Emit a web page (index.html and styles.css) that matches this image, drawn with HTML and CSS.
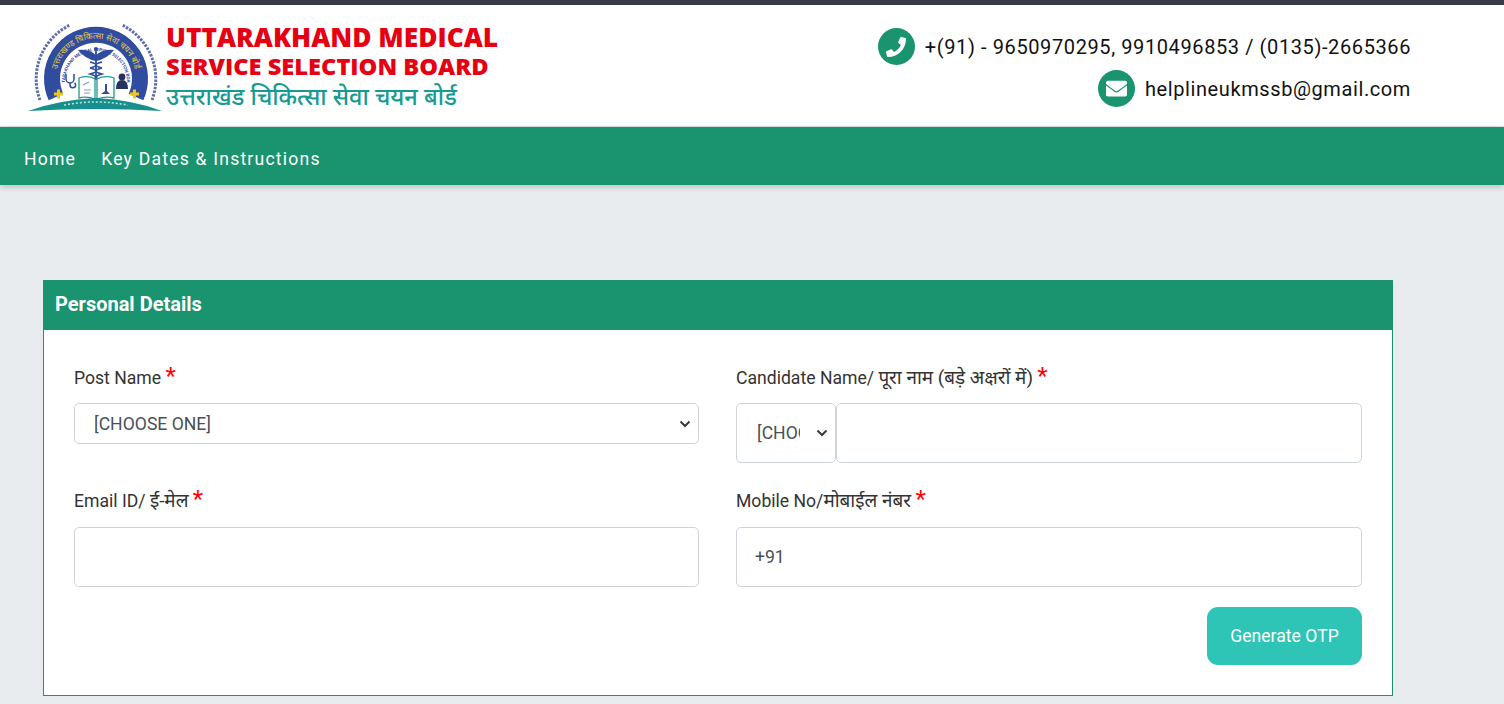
FILE: index.html
```html
<!DOCTYPE html>
<html lang="en">
<head>
<meta charset="utf-8">
<title>Uttarakhand Medical Service Selection Board</title>
<link rel="stylesheet" href="styles.css">
</head>
<body>
<header class="site-header">
  <div class="brand">
    <svg class="logo" viewBox="0 0 136 92" width="136" height="92" aria-hidden="true">
      <defs>
        <path id="ring-yellow" d="M28.500 63 A40 40 0 1 1 107.500 63"/>
        <path id="ring-inner" d="M37 60 A31 31 0 1 1 99 60"/>
      </defs>
      <path d="M28 75 A44 44 0 1 1 108 75" fill="none" stroke="#2f4c9f" stroke-width="16"/>
      <text class="logo-ring-hi"><textPath href="#ring-yellow" startOffset="50%" text-anchor="middle">उत्तराखण्ड चिकित्सा सेवा चयन बोर्ड</textPath></text>
      <text class="logo-ring-en"><textPath href="#ring-inner" startOffset="50%" text-anchor="middle">UTTARAKHAND MEDICAL SERVICE SELECTION BOARD</textPath></text>
      <path d="M12 78 A60 60 0 0 1 42 3" fill="none" stroke="#5f6fa8" stroke-width="3" stroke-dasharray="2.500 1.200"/>
      <path d="M124 78 A60 60 0 0 0 94 3" fill="none" stroke="#5f6fa8" stroke-width="3" stroke-dasharray="2.500 1.200"/>
      <path d="M68 26 v32" stroke="#2f4c9f" stroke-width="1.800"/>
      <circle cx="68" cy="27" r="2" fill="#2f4c9f"/>
      <path d="M50 28 q11 -1 18 5 q7 -6 18 -5 q-7 9 -18 11 q-11 -2 -18 -11z" fill="#2f4c9f"/>
      <path d="M62 40 q12 3 0 6 q12 3 0 6 q10 3 3 5 M74 40 q-12 3 0 6 q-12 3 0 6 q-10 3 -3 5" fill="none" stroke="#2f4c9f" stroke-width="1.500"/>
      <path d="M38 52 v5 a4 4 0 0 0 8 0 v-5" fill="none" stroke="#2f4c9f" stroke-width="1.500"/>
      <path d="M42 61 v2 a2.800 2.800 0 0 0 5.600 0 a2.800 2.800 0 0 0 -1 -2.200" fill="none" stroke="#2f4c9f" stroke-width="1.500"/>
      <path d="M51 56 q9 -3 16 1 v20 q-8 -3 -16 -1z M86 56 q-9 -3 -17 1 v20 q9 -3 17 -1z" fill="#fff" stroke="#1f9c8e" stroke-width="1.300"/>
      <path d="M73 72 h9 l-3 -3 v-7 h-2 v7z" fill="#2f4c9f"/>
      <path d="M55 63 l6 -3 M56 68 h7 M56 71 h6" stroke="#8e9ab0" stroke-width="1.200"/>
      <circle cx="94" cy="55" r="3.400" fill="#24345f"/>
      <path d="M88 67 q0 -9 6 -9 q6 0 6 9z" fill="#24345f"/>
      <path d="M26 72 h9 M30.500 67.500 v9 M102 72 h9 M106.500 67.500 v9" stroke="#f0c419" stroke-width="3"/>
      <path d="M0 89 Q30 78 68 76 Q106 78 134 89 Q68 85 0 89Z" fill="#178f8d"/>
      <path d="M36 83 Q68 77 100 83" fill="none" stroke="#bfe6df" stroke-width="1.500" stroke-dasharray="2 2"/>
    </svg>
    <div class="brand-text">
      <div class="brand-line-one">UTTARAKHAND MEDICAL</div>
      <div class="brand-line-two">SERVICE SELECTION BOARD</div>
      <div class="brand-line-three">उत्तराखंड चिकित्सा सेवा चयन बोर्ड</div>
    </div>
  </div>
  <div class="contacts">
    <div class="contact">
      <span class="contact-icon">
        <svg viewBox="0 0 512 512" width="20" height="20"><path d="M493.400 24.600l-104-24c-11.300-2.600-22.900 3.300-27.500 13.900l-48 112c-4.200 9.800-1.400 21.300 6.900 28l60.600 49.600c-36 76.700-98.900 140.500-177.200 177.200l-49.600-60.600c-6.800-8.300-18.200-11.100-28-6.900l-112 48C3.900 366.500-2 378.100.6 389.400l24 104C27.100 504.200 36.700 512 48 512c256.100 0 464-207.500 464-464 0-11.200-7.700-20.900-18.600-23.400z" fill="#fff"/></svg>
      </span>
      <span>+(91) - 9650970295, 9910496853 / (0135)-2665366</span>
    </div>
    <div class="contact">
      <span class="contact-icon">
        <svg viewBox="0 0 512 512" width="21" height="21"><path d="M502.300 190.800c3.900-3.100 9.700-.2 9.700 4.700V400c0 26.500-21.500 48-48 48H48c-26.500 0-48-21.500-48-48V195.600c0-5 5.700-7.800 9.700-4.700 22.400 17.400 52.100 39.500 154.100 113.600 21.100 15.400 56.700 47.800 92.200 47.600 35.700.3 72-32.800 92.300-47.600 102-74.100 131.600-96.300 154-113.700zM256 320c23.200.4 56.600-29.200 73.400-41.400 132.700-96.300 142.800-104.700 173.400-128.700 5.800-4.500 9.200-11.500 9.200-18.900v-19c0-26.500-21.500-48-48-48H48C21.500 64 0 85.500 0 112v19c0 7.400 3.400 14.300 9.200 18.900 30.600 23.900 40.700 32.400 173.400 128.700 16.800 12.200 50.200 41.800 73.400 41.400z" fill="#fff"/></svg>
      </span>
      <span>helplineukmssb@gmail.com</span>
    </div>
  </div>
</header>
<nav class="main-nav">
  <a href="#">Home</a>
  <a href="#">Key Dates &amp; Instructions</a>
</nav>
<main class="content">
  <section class="card">
    <h2 class="card-title">Personal Details</h2>
    <form class="form-grid">
      <div class="field">
        <label>Post Name <span class="req">*</span></label>
        <select class="control short"><option>[CHOOSE ONE]</option></select>
      </div>
      <div class="field">
        <label>Candidate Name/ <span class="hi">पूरा नाम (बड़े अक्षरों में)</span> <span class="req">*</span></label>
        <div class="name-group">
          <select class="control tall title-select"><option>[CHOOSE ONE]</option></select>
          <input class="control tall" type="text">
        </div>
      </div>
      <div class="field field-lower">
        <label>Email ID/ <span class="hi">ई-मेल</span> <span class="req">*</span></label>
        <input class="control tall" type="text">
      </div>
      <div class="field field-lower">
        <label>Mobile No/<span class="hi">मोबाईल नंबर</span> <span class="req">*</span></label>
        <input class="control tall" type="text" value="+91">
      </div>
      <div class="actions">
        <button class="otp" type="button">Generate OTP</button>
      </div>
    </form>
  </section>
</main>
</body>
</html>
```
FILE: styles.css
```css
* { box-sizing: border-box; }
html, body { margin: 0; height: 704px; overflow: hidden; }
body { background: #e9ecef; color: #212529; font-family: Roboto, "Noto Sans", "Noto Sans Devanagari", sans-serif; font-size: 16px; }

.site-header { height: 127px; background: #fff; border-top: 5px solid #373a47; border-bottom: 1px solid #dee2e6; display: flex; justify-content: space-between; padding: 17px 93px 0 28px; }
.brand { display: flex; gap: 2px; align-items: flex-start; }
.logo { flex: none; display: block; }
.logo-ring-hi { font-family: "Noto Sans", sans-serif; font-size: 8.500px; fill: #e8c84a; }
.logo-ring-en { font-family: Roboto, sans-serif; font-size: 4.400px; font-weight: 700; fill: #2f4c9f; }
.brand-text { font-family: "Open Sans", sans-serif; font-weight: 800; color: #e60012; }
.brand-line-one { font-size: 26.300px; line-height: 30px; white-space: nowrap; }
.brand-line-two { font-size: 23.650px; line-height: 28px; white-space: nowrap; }
.brand-line-three { font-family: "Noto Sans", sans-serif; font-weight: 500; font-size: 23.550px; line-height: 32px; color: #179a92; white-space: nowrap; }

.contacts { display: flex; flex-direction: column; align-items: flex-end; gap: 5px; padding-top: 6px; }
.contact { display: flex; align-items: center; gap: 10px; font-size: 20px; letter-spacing: .6px; color: #111; height: 37px; }
.contact-icon { width: 37px; height: 37px; border-radius: 50%; background: #1a936f; display: flex; align-items: center; justify-content: center; flex: none; }

.main-nav { height: 58px; background: #1a936f; display: flex; align-items: center; gap: 25px; padding: 6px 0 0 24px; box-shadow: 0 2px 6px rgba(0,0,0,.2); position: relative; }
.main-nav a { color: #fff; text-decoration: none; font-size: 17.600px; letter-spacing: 1.200px; }

.content { padding: 95px 111px 0 43px; }
.card { background: #fff; border: 1px solid #1a936f; height: 416px; }
.card-title { margin: 0; height: 49px; background: #1a936f; color: #fff; font-size: 20px; font-weight: 700; line-height: 47px; padding-left: 11px; }

.form-grid { display: grid; grid-template-columns: 625px 626px; column-gap: 37px; padding: 30px 30px 0 30px; }
.field { display: flex; flex-direction: column; }
.field label { height: 43px; line-height: 36px; font-size: 17.600px; color: #333; white-space: nowrap; }
.field-lower label { height: 44px; }
.hi { font-size: 18.900px; }
.req { color: #f00; font-size: 24px; line-height: 20px; }
.control { border: 1px solid #ced4da; border-radius: 5px; background: #fff; color: #495057; font-family: inherit; font-size: 17.600px; }
select.control { appearance: none; background: #fff url("data:image/svg+xml,%3Csvg xmlns='http://www.w3.org/2000/svg' width='12' height='8'%3E%3Cpath d='M1.500 1.500L6 6l4.500-4.500' fill='none' stroke='%23343a40' stroke-width='2'/%3E%3C/svg%3E") no-repeat right 7px center; }
.short { height: 41px; padding: 0 30px 0 19px; width: 100%; margin-bottom: 20px; }
.tall { height: 60px; padding: 0 18px; width: 100%; margin-bottom: 20px; }
select.tall { padding: 0 35px 0 20px; }
.name-group { display: flex; }
.title-select { width: 100px; flex: none; }
.actions { grid-column: 2; display: flex; justify-content: flex-end; }
.otp { width: 155px; height: 58px; border: 0; border-radius: 11px; background: #2ec4b6; color: #fff; font-family: inherit; font-size: 17.600px; }
```
